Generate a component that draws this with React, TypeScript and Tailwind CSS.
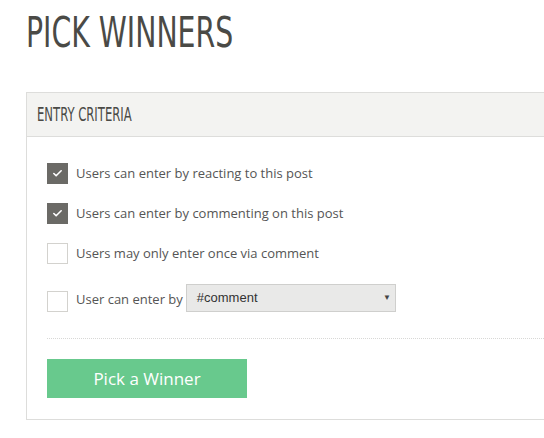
import { Check } from 'lucide-react';

const rows = [
  { label: 'Users can enter by reacting to this post', checked: true },
  { label: 'Users can enter by commenting on this post', checked: true },
  { label: 'Users may only enter once via comment', checked: false },
];

const condensed = { fontFamily: '"DejaVu Sans Condensed", "Liberation Sans", sans-serif' };

function Box({ checked }: { checked: boolean }) {
  return checked ? (
    <span className="w-[21px] h-[21px] bg-[#6b6a66] flex items-center justify-center shrink-0">
      <Check className="w-[11px] h-[11px] text-white" strokeWidth={3.5} />
    </span>
  ) : (
    <span className="block w-[21px] h-[21px] border border-[#d3d2ce] bg-white shrink-0" />
  );
}

export default function App() {
  return (
    <div className="min-h-screen bg-white pl-[26px] pt-[8px] overflow-hidden" style={{ fontFamily: '"Open Sans", sans-serif' }}>
      <h1
        className="text-[42px] leading-[50px] text-[#4a4a46] origin-left scale-x-[0.75] inline-block whitespace-nowrap"
        style={condensed}
      >
        PICK WINNERS
      </h1>

      <div className="mt-[34px] border border-[#dddddb] border-r-0 w-[540px]">
        <div className="h-[44px] bg-[#f3f3f1] border-b border-[#dddddb] flex items-center pl-[10px]">
          <span
            className="text-[19px] text-[#4a4a46] origin-left scale-x-[0.68] inline-block whitespace-nowrap"
            style={condensed}
          >
            ENTRY CRITERIA
          </span>
        </div>

        <div className="px-[20px] pt-[26px] pb-[21px]">
          <div className="flex flex-col gap-[19px]">
            {rows.map((r) => (
              <label key={r.label} className="flex items-center gap-[8px] h-[21px] text-[13px] text-[#555]">
                <Box checked={r.checked} />
                <span>{r.label}</span>
              </label>
            ))}
            <div className="flex items-center h-[28px] text-[13px] text-[#555] mt-[1px]">
              <span className="flex mt-[6px]">
                <Box checked={false} />
              </span>
              <span className="ml-[8px] mr-[3px] mt-[4px]">User can enter by</span>
              <div
                className="w-[210px] h-[28px] bg-[#e9e9e8] border border-[#cfcfcd] flex items-center justify-between pl-[10px] pr-[4px] text-[13px] text-[#333]"
                style={{ fontFamily: '"Liberation Sans", Arial, sans-serif' }}
              >
                <span>#comment</span>
                <span className="text-[8px] text-[#444]">▼</span>
              </div>
            </div>
          </div>

          <div className="mt-[26px] border-t border-dotted border-[#d8d8d6]" />

          <button className="mt-[20px] w-[200px] h-[39px] bg-[#68c98d] text-white text-[17px] flex items-center justify-center">
            Pick a Winner
          </button>
        </div>
      </div>
    </div>
  );
}
